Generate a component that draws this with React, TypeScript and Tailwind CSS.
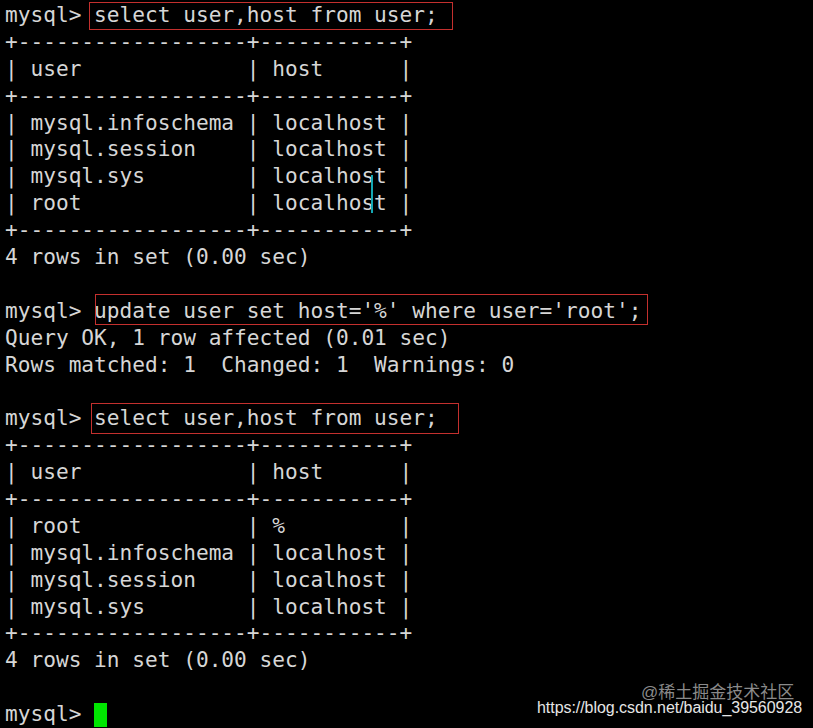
const sep = "+------------------+-----------+"

const firstTable = [
  sep,
  "| user             | host      |",
  sep,
  "| mysql.infoschema | localhost |",
  "| mysql.session    | localhost |",
  "| mysql.sys        | localhost |",
  "| root             | localhost |",
  sep,
  "4 rows in set (0.00 sec)",
  "",
]

const secondTable = [
  sep,
  "| user             | host      |",
  sep,
  "| root             | %         |",
  "| mysql.infoschema | localhost |",
  "| mysql.session    | localhost |",
  "| mysql.sys        | localhost |",
  sep,
  "4 rows in set (0.00 sec)",
  "",
]

function Line({ text }: { text: string }) {
  return <div className="h-[26.9px] whitespace-pre">{text || " "}</div>
}

// command with the red annotation box drawn on top of it
function Command({ text, box }: { text: string; box: string }) {
  return (
    <div className="h-[26.9px] whitespace-pre">
      mysql&gt;{" "}
      <span className="relative">
        {text}
        <span className={`pointer-events-none absolute border-[1.5px] border-[#c4302e] ${box}`} />
      </span>
    </div>
  )
}

export default function App() {
  return (
    <div className="relative h-[728px] w-[813px] overflow-hidden bg-black">
      <div
        className="pl-[5px] pt-[2px] text-[21.15px] leading-[26.9px] text-[#d6d6d6]"
        style={{ fontFamily: '"DejaVu Sans Mono", monospace' }}
      >
        <Command text="select user,host from user;" box="-left-[5px] -right-[15px] top-[0px] -bottom-[3px]" />
        {firstTable.map((l, i) => (
          <Line key={"a" + i} text={l} />
        ))}
        <Command text="update user set host='%' where user='root';" box="left-[1px] -right-[7px] -top-[4px] -bottom-[2px]" />
        <Line text="Query OK, 1 row affected (0.01 sec)" />
        <Line text="Rows matched: 1  Changed: 1  Warnings: 0" />
        <Line text="" />
        <Command text="select user,host from user;" box="-left-[3px] -right-[21px] -top-[2px] -bottom-[4px]" />
        {secondTable.map((l, i) => (
          <Line key={"b" + i} text={l} />
        ))}
        <div className="flex h-[26.9px] items-center whitespace-pre">
          mysql&gt;{" "}
          <span className="inline-block h-[24px] w-[13px] bg-[#00e600]" />
        </div>
      </div>

      {/* text cursor left in the first table */}
      <div className="absolute left-[371px] top-[175px] h-[38px] w-[2px] bg-[#14a7b3]" />

      {/* watermarks */}
      <div
        className="absolute left-[641px] top-[683px] text-[17px] leading-[20px] text-[#8a8a8a]"
        style={{ fontFamily: '"Liberation Sans", "Noto Sans CJK SC", sans-serif' }}
      >
        @稀土掘金技术社区
      </div>
      <div
        className="absolute left-[537px] top-[698px] text-[16px] leading-[20px] tracking-[-0.05px] text-[#e6e6e6]"
        style={{ fontFamily: '"Liberation Sans", sans-serif' }}
      >
        https://blog.csdn.net/baidu_39560928
      </div>
    </div>
  )
}
